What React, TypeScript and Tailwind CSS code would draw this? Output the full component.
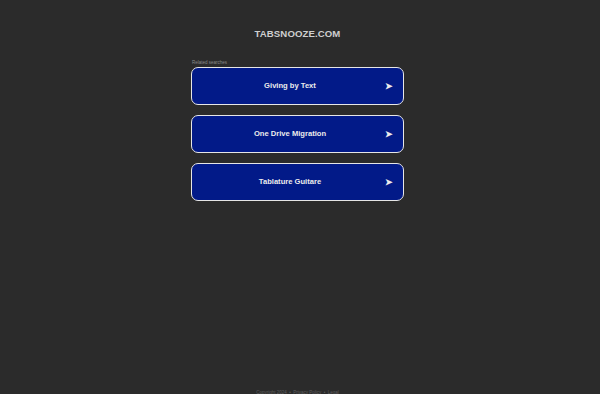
import React from 'react';

const searches = ['Giving by Text', 'One Drive Migration', 'Tablature Guitare'];

const SearchRow: React.FC<{ label: string }> = ({ label }) => (
  <a
    href="#"
    className="relative flex h-[38px] items-center justify-center rounded-[7px] border-[1.5px] border-[#e6e6e6] bg-[#021a88] text-[7.6px] font-bold text-[#ececec]"
  >
    <span className="-ml-[15px]">{label}</span>
    <span className="absolute right-[10px] top-1/2 -translate-y-1/2 text-[9px] leading-none">➤</span>
  </a>
);

export default function App() {
  return (
    <div
      className="min-h-[400px] w-full bg-[#2b2b2b]"
      style={{ fontFamily: '"Liberation Sans", Arial, sans-serif' }}
    >
      <div className="mx-auto flex w-[595px] flex-col items-center pr-[5px]">
        <h1 className="mt-[29px] text-[9.6px] font-bold leading-[10px] tracking-[0.1px] text-[#cfcfcf]">
          TABSNOOZE.COM
        </h1>
        <div className="mt-[21px] w-[213px]">
          <div className="mb-[1px] pl-[1px] text-[4.5px] leading-[6px] text-[#8a8a8a]">Related searches</div>
          <div className="flex flex-col gap-[10px]">
            {searches.map((s) => (
              <SearchRow key={s} label={s} />
            ))}
          </div>
        </div>
        <div className="mt-[189px] text-[4.5px] leading-[6px] text-[#5e5e5e]">
          Copyright 2024 &nbsp;•&nbsp; Privacy Policy &nbsp;•&nbsp; Legal
        </div>
      </div>
    </div>
  );
}
